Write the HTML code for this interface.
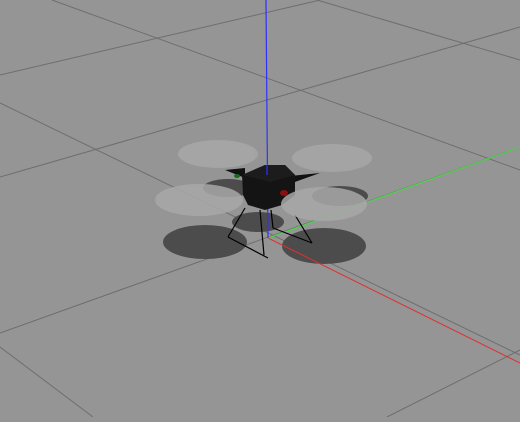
<!DOCTYPE html><html><head><style>html,body{margin:0;padding:0;background:#959595;overflow:hidden}</style></head><body>
<svg width="520" height="417" viewBox="0 0 520 417" xmlns="http://www.w3.org/2000/svg">
<rect width="520" height="417" fill="#959595"/>
<g stroke="#6e6e6e" stroke-width="1" fill="none">
<line x1="52" y1="0" x2="520" y2="170"/>
<line x1="317" y1="0" x2="520" y2="60"/>
<line x1="0" y1="103" x2="520" y2="355"/>
<line x1="0" y1="347" x2="93" y2="417"/>
<line x1="0" y1="75" x2="320" y2="0"/>
<line x1="0" y1="177" x2="520" y2="27"/>
<line x1="0" y1="333" x2="520" y2="147"/>
<line x1="387" y1="417" x2="520" y2="350"/>
</g>
<g fill="#4c4c4c">
<ellipse cx="205" cy="242" rx="42" ry="17"/>
<ellipse cx="324" cy="246" rx="42" ry="18"/>
<ellipse cx="258" cy="222" rx="26" ry="10"/>
<ellipse cx="340" cy="196" rx="28" ry="10"/>
<ellipse cx="228" cy="188" rx="25" ry="9"/>
</g>
<line x1="268" y1="238" x2="520" y2="363" stroke="#e03030" stroke-width="1"/>
<line x1="268" y1="238" x2="520" y2="147" stroke="#40e040" stroke-width="1"/>
<g fill="#a6a6a6" opacity="0.9">
<ellipse cx="218" cy="154" rx="40" ry="14"/>
<ellipse cx="332" cy="158" rx="40" ry="14"/>
</g>
<g stroke="#000" stroke-width="1.2" fill="none">
<line x1="245" y1="208" x2="228" y2="237"/>
<line x1="228" y1="237" x2="268" y2="258"/>
<line x1="260" y1="210" x2="264" y2="255"/>
<line x1="271" y1="210" x2="273" y2="228"/>
<line x1="273" y1="228" x2="312" y2="243"/>
<line x1="295" y1="215" x2="312" y2="243"/>
</g>
<line x1="266" y1="0" x2="268" y2="238" stroke="#3030ff" stroke-width="1.2"/>
<polygon points="225,170 245,168 245,178" fill="#111"/>
<polygon points="290,176 320,173 292,183" fill="#111"/>
<polygon points="242,175 265,165 285,165 295,175 295,195 282,205 265,210 248,205 243,195" fill="#141414"/>
<polygon points="242,175 265,165 285,165 295,175 270,182" fill="#1c1c1c"/>
<line x1="267" y1="165" x2="267" y2="175" stroke="#3030ff" stroke-width="1.2"/>
<ellipse cx="284" cy="193" rx="4" ry="3" fill="#8a0e0e"/>
<ellipse cx="237" cy="176" rx="3" ry="2" fill="#1a6a1a"/>
<g fill="#a8a8a8" opacity="0.85">
<ellipse cx="199" cy="200" rx="44" ry="16"/>
<ellipse cx="324" cy="204" rx="43" ry="17"/>
</g>
</svg>
</body></html>
